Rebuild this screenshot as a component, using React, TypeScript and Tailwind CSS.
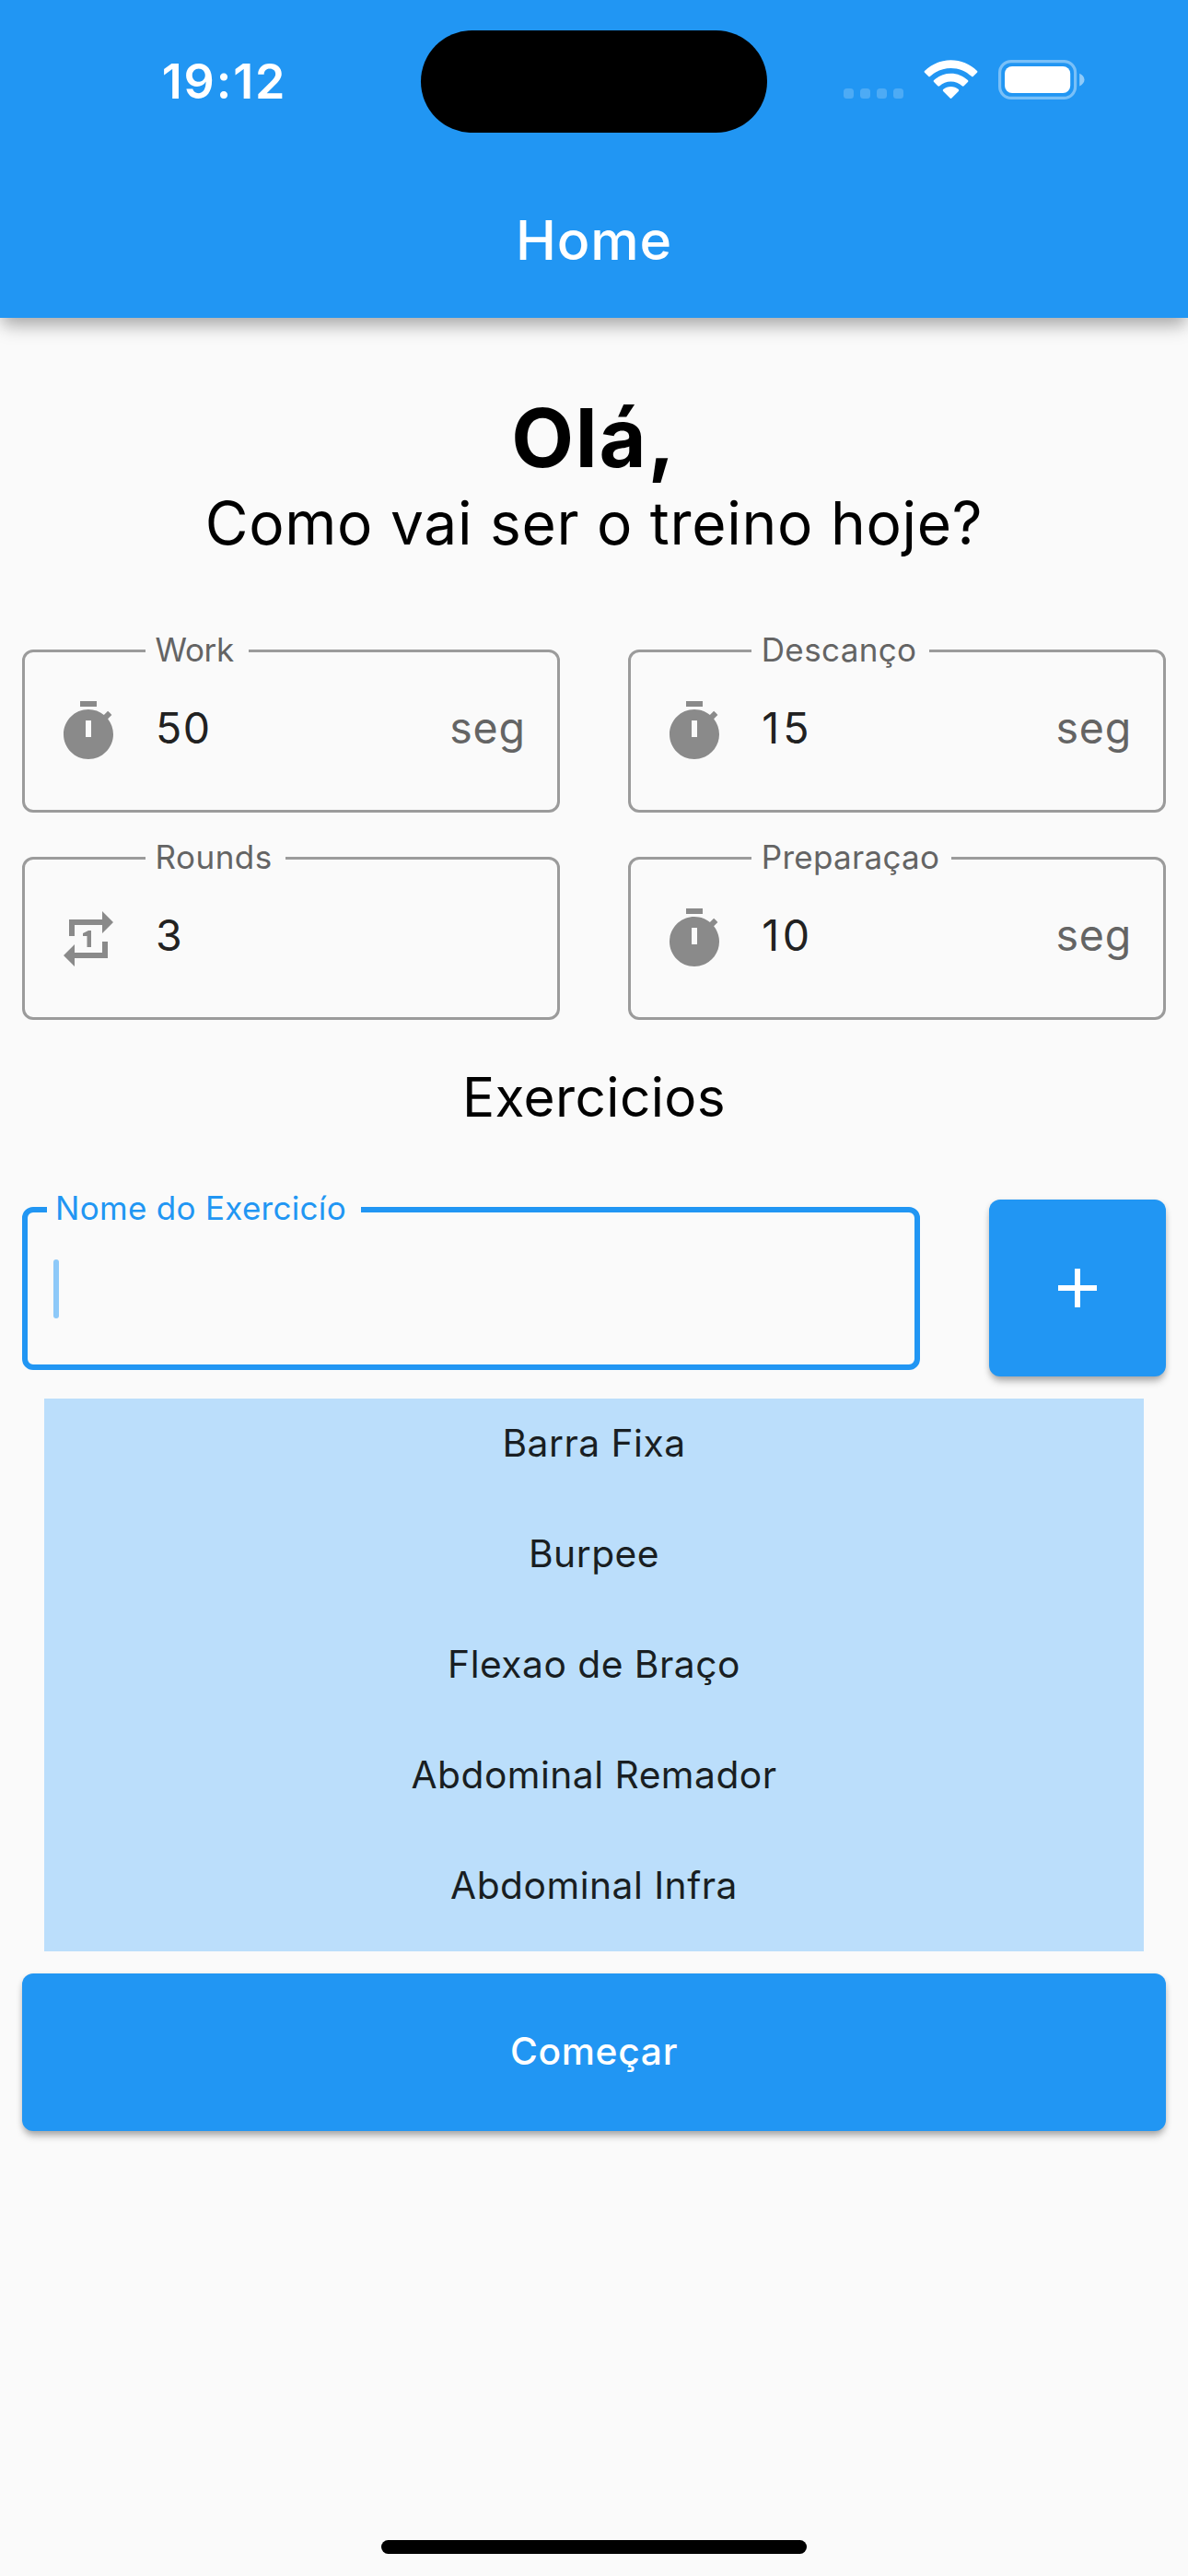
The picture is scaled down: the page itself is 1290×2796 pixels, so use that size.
import type { ReactNode } from 'react';

function TimerIcon() {
  return (
    <svg className="size-[72px]" viewBox="0 0 24 24" fill="#8a8a8a">
      <path
        fillRule="evenodd"
        clipRule="evenodd"
        d="M15 1H9v2h6V1zm-4 13h2V8h-2v6zm8.03-6.61l1.42-1.42c-.43-.51-.9-.99-1.41-1.41l-1.42 1.42C16.07 4.74 14.12 4 12 4c-4.97 0-9 4.03-9 9s4.02 9 9 9 9-4.03 9-9c0-2.12-.74-4.07-1.97-5.61z"
      />
    </svg>
  );
}

function RepeatOneIcon() {
  return (
    <svg className="size-[72px]" viewBox="0 0 24 24" fill="#8a8a8a">
      <path d="M7 7h10v3l4-4-4-4v3H5v6h2V7zm10 10H7v-3l-4 4 4 4v-3h12v-6h-2v4zm-4-2V9h-1l-2 1v1h1.5v4H13z" />
    </svg>
  );
}

function StatusIcons() {
  return (
    <div className="flex h-[43px] items-start">
      <div className="mt-[31px] flex gap-[7px]">
        <span className="size-[11px] rounded-[3.5px] bg-white/20" />
        <span className="size-[11px] rounded-[3.5px] bg-white/20" />
        <span className="size-[11px] rounded-[3.5px] bg-white/20" />
        <span className="size-[11px] rounded-[3.5px] bg-white/20" />
      </div>
      <svg className="ml-[22px] h-[43px] w-[59px]" viewBox="0 0 59 43" fill="#fff">
        <path d="M29.5 0.2C40.2 0.2 50.4 4.4 58 11.9Q58.9 12.8 58 13.7L53.9 17.8Q52.9 18.8 51.9 17.8C45.8 12.1 37.9 8.9 29.5 8.9S13.2 12.1 7.1 17.8Q6.1 18.8 5.1 17.8L1 13.7Q.1 12.8 1 11.9C8.6 4.4 18.8.2 29.5.2Z" />
        <path d="M29.5 14.8C36.4 14.8 42.9 17.4 47.9 22.1Q48.9 23 47.9 24L43.7 28.2Q42.7 29.1 41.7 28.2C38.4 25.1 34.1 23.4 29.5 23.4S20.6 25.1 17.3 28.2Q16.3 29.1 15.3 28.2L11.1 24Q10.1 23 11.1 22.1C16.1 17.4 22.6 14.8 29.5 14.8Z" />
        <path d="M29.5 28.9C32.6 28.9 35.5 30 37.8 32Q38.8 32.9 37.9 33.9L30.4 41.5Q29.5 42.4 28.6 41.5L21.1 33.9Q20.2 32.9 21.2 32C23.5 30 26.4 28.9 29.5 28.9Z" />
      </svg>
      <svg className="ml-[22px] h-[43px] w-[94px]" viewBox="0 0 94 43">
        <rect x="1.6" y="1.6" width="82" height="39.8" rx="12.4" fill="none" stroke="#fff" strokeOpacity=".4" strokeWidth="3.2" />
        <rect x="7" y="7" width="71.2" height="29" rx="8" fill="#fff" />
        <path d="M88.2 14.8C91.3 16.1 93.5 18.6 93.5 21.6S91.3 27.2 88.2 28.5Z" fill="#fff" fillOpacity=".5" />
      </svg>
    </div>
  );
}

type FieldProps = {
  label: string;
  labelClass: string;
  gapClass: string;
  value: string;
  valueClass: string;
  unit?: boolean;
  icon: ReactNode;
};

function Field({ label, labelClass, gapClass, value, valueClass, unit, icon }: FieldProps) {
  return (
    <div className="relative flex h-[177px] items-center rounded-xl border-3 border-[#9b9b9b] pr-[34px] pl-[33px]">
      <span
        className={`absolute -top-[23px] left-[130.5px] flex h-10 items-center bg-[#fafafa] pl-[11px] text-[35px] whitespace-nowrap text-[#646464] ${gapClass} ${labelClass}`}
      >
        {label}
      </span>
      {icon}
      <div className={`-mt-[7px] ml-[37px] flex-1 text-[46.5px] leading-[60px] text-[#212121] ${valueClass}`}>{value}</div>
      {unit && <div className="-mt-[7px] text-[46.5px] leading-[60px] tracking-[0.8px] text-[#646464]">seg</div>}
    </div>
  );
}

const exercises = ['Barra Fixa', 'Burpee', 'Flexao de Braço', 'Abdominal Remador', 'Abdominal Infra'];

export default function App() {
  return (
    <div className="flex h-[2796px] w-[1290px] flex-col overflow-hidden bg-[#fafafa] font-['Inter',sans-serif]">
      <header className="relative h-[345px] shrink-0 bg-[#2196f3] text-white shadow-[0_12px_18px_-3px_rgba(0,0,0,0.28),0_3px_15px_rgba(0,0,0,0.08)]">
        <div className="flex h-[177px] items-start">
          <div className="mt-[59px] ml-[175.7px] w-[281.3px] text-[52px] leading-[60px] font-semibold tracking-[1.87px]">
            19:12
          </div>
          <div className="mt-[33px] h-[111px] w-[376px] rounded-full bg-black" />
          <div className="mt-[65px] ml-[83px]">
            <StatusIcons />
          </div>
        </div>
        <h1 className="text-center text-[59px] leading-[168px] font-medium tracking-[0.9px]">Home</h1>
      </header>

      <main className="flex grow flex-col px-6">
        <h2 className="mt-20 text-center text-[88px] leading-[101px] font-bold tracking-[1.89px] text-black">Olá,</h2>
        <p className="text-center text-[64px] leading-[83px] tracking-[0.73px] text-black">Como vai ser o treino hoje?</p>

        <section className="mt-24 grid grid-cols-2 gap-x-[74.5px] gap-y-12">
          <Field label="Work" labelClass="tracking-[-0.3px]" gapClass="w-[112px]" value="50" valueClass="tracking-[1.5px]" unit icon={<TimerIcon />} />
          <Field label="Descanço" labelClass="tracking-[0.36px]" gapClass="w-[193.5px]" value="15" valueClass="tracking-[4px]" unit icon={<TimerIcon />} />
          <Field label="Rounds" labelClass="tracking-[0.5px]" gapClass="w-[152px]" value="3" valueClass="tracking-normal" icon={<RepeatOneIcon />} />
          <Field label="Preparaçao" labelClass="tracking-[0.3px]" gapClass="w-[217.5px]" value="10" valueClass="tracking-[3.6px]" unit icon={<TimerIcon />} />
        </section>

        <h3 className="mt-11 mb-[71px] text-center text-[58.5px] leading-[80px] tracking-[0.4px] text-black">Exercicios</h3>

        <section className="flex gap-[75px]">
          <div className="relative mt-[7.5px] h-[177px] w-[975px] rounded-xl border-6 border-[#2196f3]">
            <span className="absolute -top-[24px] left-[21px] flex h-10 w-[341px] items-center bg-[#fafafa] pl-[9px] text-[35px] tracking-[0.3px] whitespace-nowrap text-[#2196f3]">
              Nome do Exercicío
            </span>
            <span className="mt-[51.5px] ml-7 block h-16 w-1.5 rounded-full bg-[#8dc9f9]" />
          </div>
          <button className="flex size-48 items-center justify-center rounded-xl bg-[#2196f3] shadow-[0_7px_8px_-2px_rgba(0,0,0,0.28),0_2px_6px_rgba(0,0,0,0.12)]">
            <svg className="size-[42px]" viewBox="0 0 14 14" fill="#fff">
              <path d="M14 8H8v6H6V8H0V6h6V0h2v6h6z" />
            </svg>
          </button>
        </section>

        <ul className="mx-6 mt-6 h-[600px] bg-[#bbdefb] pt-px text-center text-[40.75px] leading-[96px] tracking-[0.48px] text-[#191e22]">
          {exercises.map((name) => (
            <li key={name} className="mb-6">
              {name}
            </li>
          ))}
        </ul>

        <button className="mt-6 h-[171px] shrink-0 rounded-xl bg-[#2196f3] pb-px text-[40.75px] font-medium tracking-[0.67px] text-white shadow-[0_7px_8px_-2px_rgba(0,0,0,0.28),0_2px_6px_rgba(0,0,0,0.12)]">
          Começar
        </button>

        <div className="mt-auto mb-6 h-[15px] w-[462px] self-center rounded-full bg-black" />
      </main>
    </div>
  );
}
